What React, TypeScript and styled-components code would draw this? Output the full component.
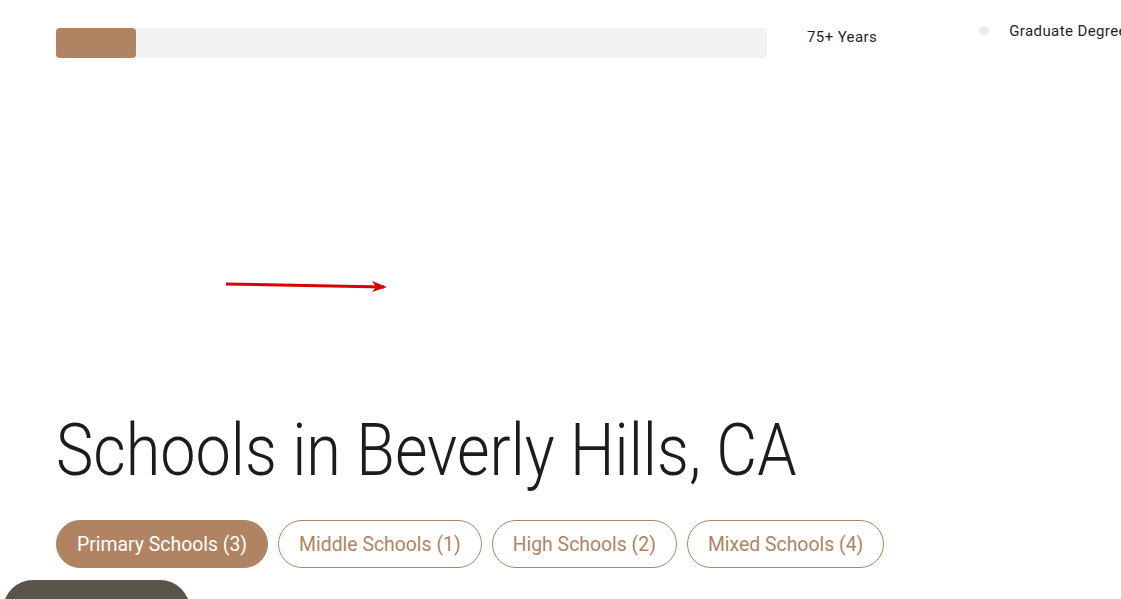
import React from "react";
import styled, { createGlobalStyle } from "styled-components";

const GlobalStyle = createGlobalStyle`
  body {
    margin: 0;
    background: #ffffff;
    font-family: Roboto, "Liberation Sans", sans-serif;
    overflow: hidden;
  }
`;

const Page = styled.div`
  width: 1121px;
  height: 599px;
  padding: 28px 0 0 56px;
  box-sizing: border-box;
  overflow: hidden;
  white-space: nowrap;
`;

const StatRow = styled.div`
  display: flex;
  align-items: flex-start;
  height: 30px;
`;

const Track = styled.div`
  width: 711px;
  height: 30px;
  background: #f2f2f2;
  border-radius: 4px;
  flex-shrink: 0;
`;

const Fill = styled.div`
  height: 100%;
  background: #b08462;
  border-radius: 4px;
`;

const YearLabel = styled.div`
  margin: -1px 0 0 40px;
  font-size: 15px;
  line-height: 20px;
  color: #1f1f1f;
  letter-spacing: 0.4px;
  flex-shrink: 0;
`;

const Legend = styled.div`
  display: flex;
  align-items: center;
  gap: 20px;
  margin: -7px 0 0 102px;
  font-size: 15px;
  line-height: 20px;
  color: #1f1f1f;
  letter-spacing: 0.4px;
  flex-shrink: 0;
`;

const Dot = styled.span`
  width: 10px;
  height: 10px;
  border-radius: 50%;
  background: #ebebeb;
`;

const ArrowArea = styled.div`
  height: 357px;
  padding: 221px 0 0 170px;
  box-sizing: border-box;

  svg {
    display: block;
  }
`;

const Heading = styled.h1`
  margin: 0;
  font-family: Roboto, "Liberation Sans", sans-serif;
  font-weight: 300;
  font-size: 72px;
  line-height: 72px;
  color: #1c1c1c;
  letter-spacing: 0;
  transform: scaleX(0.874);
  transform-origin: left center;
`;

const PillRow = styled.div`
  display: flex;
  gap: 10px;
  margin-top: 33px;
`;

const Pill = styled.button<{ $active?: boolean }>`
  height: 48px;
  padding: 0 20px;
  border-radius: 24px;
  border: 1px solid #b08462;
  background: ${(p) => (p.$active ? "#b08462" : "#ffffff")};
  color: ${(p) => (p.$active ? "#ffffff" : "#b08462")};
  font-family: Roboto, "Liberation Sans", sans-serif;
  font-size: 19.4px;
  cursor: pointer;
`;

const FloatButton = styled.div`
  position: fixed;
  left: 3px;
  top: 580px;
  width: 187px;
  height: 60px;
  border-radius: 30px;
  background: #5a554b;
`;

const schoolTabs = [
  { label: "Primary Schools (3)", active: true },
  { label: "Middle Schools (1)" },
  { label: "High Schools (2)" },
  { label: "Mixed Schools (4)" },
];

const App = () => {
  const share = 80 / 711;

  return (
    <Page>
      <GlobalStyle />
      <StatRow>
        <Track>
          <Fill style={{ width: `${share * 100}%` }} />
        </Track>
        <YearLabel>75+ Years</YearLabel>
        <Legend>
          <Dot />
          Graduate Degree
        </Legend>
      </StatRow>
      <ArrowArea>
        <svg width="170" height="16" viewBox="0 0 170 16">
          <line x1="0" y1="5" x2="158" y2="8" stroke="#d90000" strokeWidth="3" />
          <path d="M146 2 L161 8 L146 13 L150 8 Z" fill="#d90000" />
        </svg>
      </ArrowArea>
      <Heading>Schools in Beverly Hills, CA</Heading>
      <PillRow>
        {schoolTabs.map((t) => (
          <Pill key={t.label} $active={t.active}>
            {t.label}
          </Pill>
        ))}
      </PillRow>
      <FloatButton />
    </Page>
  );
};

export default App;
